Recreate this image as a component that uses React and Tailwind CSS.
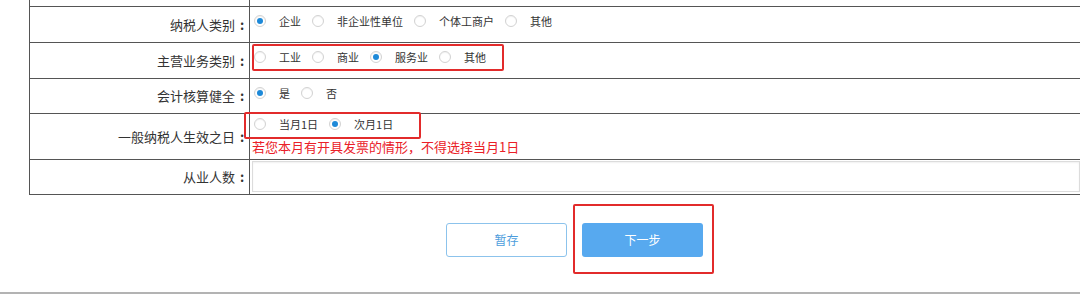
import React from 'react';

function Radio({ checked }) {
    return (
        <span className="flex h-[12px] w-[12px] shrink-0 items-center justify-center rounded-full border border-[#d2d2d2] bg-white shadow-[inset_0_1px_1px_rgba(0,0,0,0.06)]">
            {checked && <span className="h-[6px] w-[6px] rounded-full bg-[#1d89d8]"></span>}
        </span>
    );
}

function Options({ items, value }) {
    return (
        <div className="flex h-[16px] items-center pl-[4px] text-[11px] text-[#333]">
            {items.map((it) => (
                <div key={it} className="mr-[11px] flex items-center">
                    <Radio checked={it === value} />
                    <span className="ml-[13px] leading-[16px]">{it}</span>
                </div>
            ))}
        </div>
    );
}

function Row({ label, height, children }) {
    return (
        <div className={'grid grid-cols-[220px_1fr] border-b border-[#555] ' + height}>
            <div className="flex items-center justify-end border-r border-[#555] text-[13px] text-[#333]">
                {label}
                {label && <span className="w-[14px] text-center font-bold">:</span>}
            </div>
            <div className="relative">{children}</div>
        </div>
    );
}

export default function App() {
    return (
        <div className="relative h-[294px] w-[1080px] overflow-hidden bg-white font-['Noto_Sans_CJK_SC',sans-serif]">
            <div className="ml-[29px] w-[1051px] border-l border-[#555]">
                <Row label="" height="h-[7px]" />
                <Row label="纳税人类别" height="h-[36px]">
                    <div className="pt-[6px]">
                        <Options items={['企业', '非企业性单位', '个体工商户', '其他']} value="企业" />
                    </div>
                </Row>
                <Row label="主营业务类别" height="h-[36px]">
                    <div className="pt-[6px]">
                        <Options items={['工业', '商业', '服务业', '其他']} value="服务业" />
                    </div>
                    <div className="absolute left-[2px] top-[1px] h-[27px] w-[252px] rounded-[2px] border-2 border-[#e22b2b]"></div>
                </Row>
                <Row label="会计核算健全" height="h-[35px]">
                    <div className="pt-[6px]">
                        <Options items={['是', '否']} value="是" />
                    </div>
                </Row>
                <Row label="一般纳税人生效之日" height="h-[46px]">
                    <div className="pt-[2px]">
                        <Options items={['当月1日', '次月1日']} value="次月1日" />
                        <div className="mt-[6px] pl-[2px] text-[13px] leading-[18px] text-[#ea2027]">
                            若您本月有开具发票的情形，不得选择当月1日
                        </div>
                    </div>
                    <div className="absolute left-[-6px] top-[-2px] h-[27px] w-[177px] rounded-[2px] border-2 border-[#e22b2b]"></div>
                </Row>
                <Row label="从业人数" height="h-[35px]">
                    <div className="pl-[2px] pt-[1px]">
                        <div className="h-[31px] border border-[#dcdcdc] bg-white shadow-[inset_0_1px_2px_rgba(0,0,0,0.06)]"></div>
                    </div>
                </Row>
            </div>
            <div className="flex h-[97px] items-start pl-[446px]">
                <button className="mt-[28px] h-[34px] w-[121px] rounded-[3px] border border-[#8cc3ec] bg-white text-[12px] text-[#4d9ddc]">
                    暂存
                </button>
                <div className="ml-[6px] mt-[9px] h-[70px] w-[141px] rounded-[2px] border-2 border-[#e22b2b] pl-[7px] pt-[17px]">
                    <button className="h-[34px] w-[121px] rounded-[3px] bg-[#57a9ef] text-[12px] text-white">
                        下一步
                    </button>
                </div>
            </div>
            <div className="h-[3px] w-full bg-[#b3b3b3]"></div>
        </div>
    );
}
